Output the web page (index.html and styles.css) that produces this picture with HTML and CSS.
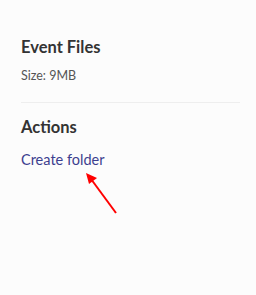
FILE: index.html
```html
<!DOCTYPE html>
<html lang="en">

<head>
    <meta charset="UTF-8">
    <title>Event Files</title>
    <link rel="stylesheet" href="styles.css">
</head>

<body>
    <div class="sidebar">
        <div class="block">
            <h3 class="title">Event Files</h3>
            <p class="size">Size: 9MB</p>
        </div>
        <div class="block actions">
            <h3 class="title">Actions</h3>
            <a class="link" href="#">Create folder</a>
        </div>
    </div>

    <svg class="arrow" width="40" height="50" viewBox="0 0 40 50">
        <line x1="35" y1="45" x2="10" y2="11" stroke="#f00" stroke-width="2"/>
        <polygon points="5,5 16,10 8,16" fill="#f00"/>
    </svg>
</body>

</html>
```

FILE: styles.css
```css
* {
    margin: 0px;
    padding: 0px;
}

body {
    background: #fcfcfc;
    font-family: Lato, "Open Sans", sans-serif;
    position: relative;
    height: 295px;
}

.sidebar {
    padding: 37px 16px 0 21px;
}

.block {
    padding-bottom: 19px;
}

.actions {
    border-top: 1px solid #eee;
    padding-top: 14px;
}

.title {
    font-size: 16.5px;
    font-weight: 700;
    color: #333;
    line-height: 20px;
    margin-bottom: 11px;
}

.actions .title {
    margin-bottom: 14px;
}

.size {
    font-size: 12.5px;
    color: #555;
    line-height: 15px;
}

.link {
    display: block;
    font-size: 14.5px;
    color: #3c3f8f;
    text-decoration: none;
    line-height: 18px;
}

.arrow {
    position: absolute;
    left: 81px;
    top: 168px;
}
```
